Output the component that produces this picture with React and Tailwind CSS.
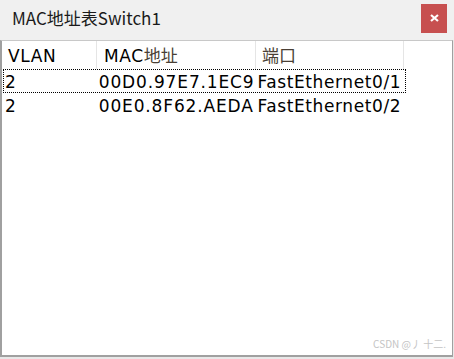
import React from 'react';

const rows = [
  { vlan: '2', mac: '00D0.97E7.1EC9', port: 'FastEthernet0/1', focused: true },
  { vlan: '2', mac: '00E0.8F62.AEDA', port: 'FastEthernet0/2', focused: false },
];

function App() {
  return (
    <div className="w-[454px] h-[359px] bg-[#e8e8e8] flex flex-col overflow-hidden">
      {/* title bar */}
      <div className="h-[40px] shrink-0 flex items-center justify-between pl-[12px] pr-[7px] bg-[#f0f0f0]">
        <span className="text-[17px] text-[#1a1a1a] pb-[4px] font-['Noto_Sans_CJK_SC',sans-serif]">
          MAC地址表Switch1
        </span>
        <button className="w-[26px] h-[29px] bg-[#c75050] flex items-center justify-center mb-[4px]">
          <svg width="9" height="8" viewBox="0 0 9 8">
            <path d="M1 1 L8 7 M8 1 L1 7" stroke="#fff" strokeWidth="2.2" />
          </svg>
        </button>
      </div>

      {/* table area */}
      <div className="relative h-[317px] shrink-0 mr-[1px] bg-white border-l-2 border-r border-b-2 border-[#a0a0a0] border-t border-t-[#c8c8c8] font-['DejaVu_Sans','Noto_Sans_CJK_SC',sans-serif] text-black">
        <div className="flex h-[28px] text-[17px] tracking-[0.6px]">
          <div className="w-[95px] pl-[6px] pt-[3px] flex items-center border-r border-[#e5e5e5]">VLAN</div>
          <div className="w-[159px] pl-[7px] pt-[3px] flex items-center border-r border-[#e5e5e5]">
            MAC<span className="text-[#4a3f35] tracking-[0px]">地址</span>
          </div>
          <div className="w-[148px] pl-[6px] pt-[3px] flex items-center border-r border-[#e5e5e5] text-[#4a3f35] tracking-[0px]">
            端口
          </div>
        </div>
        <div className="flex flex-col pl-[1px]">
          {rows.map((r, i) => (
            <div
              key={i}
              className={`flex w-[403px] h-[24px] items-center pt-[3px] text-[17px] tracking-[0.6px] whitespace-nowrap ${
                r.focused ? 'border border-dotted border-black' : 'border border-transparent'
              }`}
            >
              <div className="w-[95px] pl-[1px]">{r.vlan}</div>
              <div className="w-[158px] tracking-[0.85px]">{r.mac}</div>
              <div className="w-[149px] pl-[1px]">{r.port}</div>
            </div>
          ))}
        </div>
        <span className="absolute right-[6px] bottom-[4px] text-[10px] text-[#c4c4c4] font-['Noto_Sans_CJK_SC',sans-serif]">
          CSDN @丿 十二.
        </span>
      </div>
    </div>
  );
}

export default App;
